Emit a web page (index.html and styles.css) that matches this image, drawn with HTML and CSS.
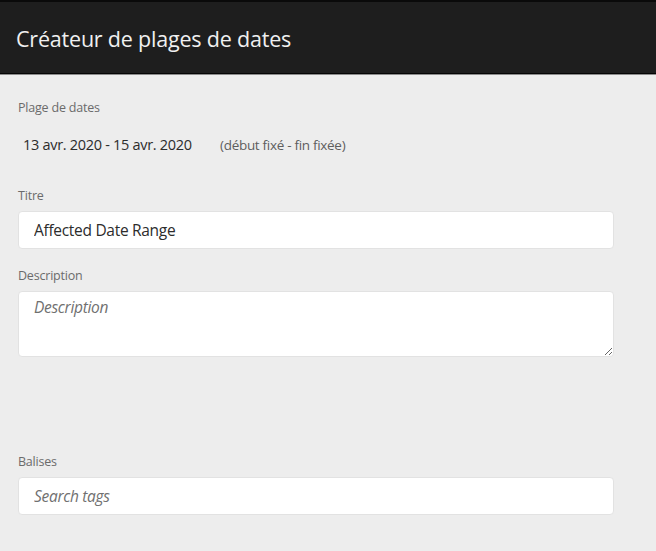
FILE: index.html
```html
<!DOCTYPE html>
<html lang="fr">
<head>
<meta charset="utf-8">
<title>Créateur de plages de dates</title>
<link rel="stylesheet" href="styles.css">
</head>
<body>
<header class="topbar">
  <h1 class="title">Créateur de plages de dates</h1>
</header>
<main class="form">
  <section class="field">
    <div class="label">Plage de dates</div>
    <div class="range">
      <span class="range-dates">13 avr. 2020 - 15 avr. 2020</span>
      <span class="range-note">(début fixé - fin fixée)</span>
    </div>
  </section>
  <section class="field field-title">
    <label class="label" for="t">Titre</label>
    <input id="t" class="input" type="text" value="Affected Date Range">
  </section>
  <section class="field field-desc">
    <label class="label" for="d">Description</label>
    <textarea id="d" class="input textarea" placeholder="Description"></textarea>
  </section>
  <section class="field field-tags">
    <label class="label" for="g">Balises</label>
    <input id="g" class="input" type="text" placeholder="Search tags">
  </section>
</main>
</body>
</html>
```
FILE: styles.css
```css
html, body {
  margin: 0;
  padding: 0;
  background: #ededed;
  font-family: "Open Sans", "Liberation Sans", sans-serif;
}
.topbar {
  height: 71px;
  background: #1e1e1e;
  border-top: 2px solid #0a0a0a;
  border-bottom: 1px solid #050505;
  box-shadow: 0 1px 0 #8c8c8c;
  display: flex;
  align-items: center;
  padding: 0 16px;
}
.title {
  margin: 0;
  font-weight: 400;
  font-size: 21.5px;
  color: #f0f0f0;
  letter-spacing: -0.2px;
  padding-top: 2px;
}
.form {
  padding: 26px 42px 20px 18px;
  display: flex;
  flex-direction: column;
}
.field {
  display: flex;
  flex-direction: column;
}
.label {
  display: block;
  font-size: 12.5px;
  line-height: 16px;
  color: #6b6b6b;
  letter-spacing: -0.2px;
  margin-bottom: 7px;
}
.range {
  display: flex;
  align-items: center;
  margin-top: 12px;
  padding-left: 5px;
  line-height: 20px;
}
.range-dates {
  font-size: 14.5px;
  color: #2c2c2c;
  letter-spacing: -0.3px;
  width: 197px;
}
.range-note {
  font-size: 13.5px;
  color: #5e5e5e;
  letter-spacing: -0.3px;
}
.field-title { margin-top: 33px; }
.field-desc { margin-top: 19px; }
.field-tags { margin-top: 97px; }
.input {
  box-sizing: border-box;
  width: 100%;
  height: 38px;
  margin: 0;
  padding: 0 15px;
  background: #fff;
  border: 1px solid #e2e2e2;
  border-radius: 4px;
  font-family: inherit;
  font-size: 15.5px;
  color: #2c2c2c;
  letter-spacing: -0.3px;
  outline: none;
}
.input::placeholder {
  font-style: italic;
  color: #707070;
}
.textarea {
  height: 66px;
  padding: 4px 15px;
  resize: both;
  display: block;
}
```
